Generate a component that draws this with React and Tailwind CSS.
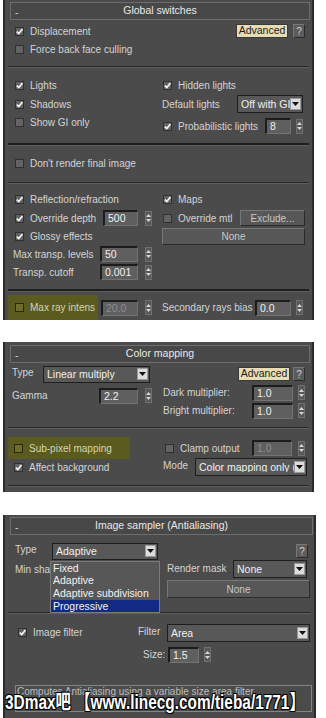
import React from "react";

function Check({ on, olive }) {
  return (
    <span
      className={
        olive
          ? "relative block w-[9px] h-[9px] shrink-0 bg-[#6e6c2a] border border-[#2a290c]"
          : "relative block w-[9px] h-[9px] shrink-0 bg-[#636363] border border-[#303030]"
      }
    >
      {on && (
        <svg className="absolute left-0 top-0" width="7" height="7" viewBox="0 0 7 7">
          <path d="M0.8 3.6 L2.8 5.6 L6.4 1.1" fill="none" stroke="#f4f4f4" strokeWidth="1.7" />
        </svg>
      )}
    </span>
  );
}

function Spin({ cls = "" }) {
  return (
    <span
      className={
        "flex flex-col items-center justify-center gap-[2px] w-[7px] h-[15px] shrink-0 bg-[#585858] border border-[#707070] " +
        cls
      }
    >
      <svg width="5" height="3" viewBox="0 0 5 3">
        <path d="M0 3L2.5 0L5 3Z" fill="#d8d8d8" />
      </svg>
      <svg width="5" height="3" viewBox="0 0 5 3">
        <path d="M0 0L2.5 3L5 0Z" fill="#d8d8d8" />
      </svg>
    </span>
  );
}

function Field({ v, cls = "", dis }) {
  return (
    <span
      className={
        "flex items-center h-[16px] shrink-0 pl-[3px] bg-[#5f5f5f] border-t-2 border-l-2 border-t-[#1c1c1c] border-l-[#1c1c1c] border-r border-b border-r-[#737373] border-b-[#737373] text-[10.5px] leading-none " +
        (dis ? "text-[#8e8e8e] " : "text-[#f0f0f0] ") +
        cls
      }
    >
      {v}
    </span>
  );
}

function Drop({ v, cls = "" }) {
  return (
    <span
      className={
        "flex items-center justify-between shrink-0 bg-[#585858] border border-[#1e1e1e] pl-[3px] pr-[1px] text-[10.5px] text-[#f0f0f0] " +
        cls
      }
    >
      <span className="whitespace-nowrap overflow-hidden leading-none pt-[1px]">{v}</span>
      <span className="w-[11px] h-[12px] bg-[#dcdcdc] border border-[#9a9a9a] flex items-center justify-center shrink-0">
        <svg width="7" height="4" viewBox="0 0 7 4">
          <path d="M0 0H7L3.5 4Z" fill="#111" />
        </svg>
      </span>
    </span>
  );
}

function Btn({ children, cls = "" }) {
  return (
    <span
      className={
        "flex items-center justify-center shrink-0 bg-[#575757] border border-t-[#777777] border-l-[#777777] border-r-[#2a2a2a] border-b-[#2a2a2a] text-[#c8c8c8] text-[10px] " +
        cls
      }
    >
      {children}
    </span>
  );
}

function Adv() {
  return (
    <span className="w-[52px] h-[14px] shrink-0 bg-[#e8dcb4] border border-[#3a3a3a] text-[#1c1c1c] flex items-center justify-center text-[10.5px]">
      Advanced
    </span>
  );
}

function Q({ cls = "" }) {
  return (
    <span
      className={
        "w-[12px] h-[14px] shrink-0 bg-[#5c5c5c] border border-t-[#777777] border-l-[#777777] border-r-[#2c2c2c] border-b-[#2c2c2c] text-[#cfcfcf] flex items-center justify-center text-[10px] " +
        cls
      }
    >
      ?
    </span>
  );
}

function Title({ text, cls = "" }) {
  return (
    <div
      className={
        "relative ml-[5px] h-[18px] border border-[#6d6d6d] bg-[#484848] flex items-center justify-center text-[#e8e8e8] text-[10.5px] " +
        cls
      }
    >
      <span className="absolute left-[4px] top-[2px] text-[#cfcfcf]">-</span>
      {text}
    </div>
  );
}

function Sep({ cls = "" }) {
  return <div className={"mx-[3px] h-[2px] border-t border-t-[#262626] border-b border-b-[#5f5f5f] " + cls} />;
}

function SepThick({ cls = "" }) {
  return <div className={"mx-[3px] h-[3px] border-t-2 border-t-[#1e1e1e] border-b border-b-[#5f5f5f] " + cls} />;
}

function Row({ children, cls = "" }) {
  return <div className={"flex items-center whitespace-nowrap " + cls}>{children}</div>;
}

export default function App() {
  return (
    <div className="relative w-[326px] h-[718px] bg-white overflow-hidden font-['Liberation_Sans','Noto_Sans_CJK_SC',sans-serif] text-[10px] text-[#d4d4d4]">
      {/* Panel 1 */}
      <div className="ml-[3px] w-[311px] h-[320px] bg-[#4b4b4b] border-x-2 border-[#2b2b2b] pt-[2px]">
        <Title text="Global switches" cls="w-[300px]" />
        <div className="pt-[2px] pl-[10px] pr-[7px]">
          <Row cls="h-[18px]">
            <Check on />
            <span className="ml-[6px]">Displacement</span>
            <span className="ml-auto">
              <Adv />
            </span>
            <Q cls="ml-[5px]" />
          </Row>
          <Row cls="h-[18px]">
            <Check />
            <span className="ml-[6px]">Force back face culling</span>
          </Row>
        </div>
        <Sep cls="mt-[8px]" />
        <div className="mt-[8px] flex">
          <div className="w-[157px] pl-[10px]">
            <Row cls="h-[19px]">
              <Check on />
              <span className="ml-[6px]">Lights</span>
            </Row>
            <Row cls="h-[18px]">
              <Check on />
              <span className="ml-[6px]">Shadows</span>
            </Row>
            <Row cls="h-[18px]">
              <Check />
              <span className="ml-[6px]">Show GI only</span>
            </Row>
          </div>
          <div className="w-[141px]">
            <Row cls="h-[19px]">
              <span className="ml-[1px]">
                <Check on />
              </span>
              <span className="ml-[6px]">Hidden lights</span>
            </Row>
            <Row cls="h-[18px]">
              <span>Default lights</span>
              <Drop v="Off with GI" cls="ml-auto w-[66px] h-[18px]" />
            </Row>
            <Row cls="mt-[4px] h-[18px]">
              <span className="ml-[1px]">
                <Check on />
              </span>
              <span className="ml-[6px]">Probabilistic lights</span>
              <Field v="8" cls="ml-auto w-[26px]" />
              <Spin cls="ml-[5px]" />
            </Row>
          </div>
        </div>
        <SepThick cls="mt-[8px]" />
        <div className="mt-[8px] pl-[10px]">
          <Row cls="h-[18px]">
            <Check />
            <span className="ml-[6px]">Don't render final image</span>
          </Row>
        </div>
        <Sep cls="mt-[10px]" />
        <div className="mt-[6px] flex">
          <div className="w-[157px] pl-[10px] pr-[10px]">
            <Row cls="h-[19px]">
              <Check on />
              <span className="ml-[6px]">Reflection/refraction</span>
            </Row>
            <Row cls="h-[18px]">
              <Check on />
              <span className="ml-[6px]">Override depth</span>
              <Field v="500" cls="ml-auto w-[35px]" />
              <Spin cls="ml-[7px]" />
            </Row>
            <Row cls="h-[18px]">
              <Check on />
              <span className="ml-[6px]">Glossy effects</span>
            </Row>
            <Row cls="h-[18px]">
              <span className="-ml-[2px]">Max transp. levels</span>
              <Field v="50" cls="ml-auto w-[38px]" />
              <Spin cls="ml-[7px]" />
            </Row>
            <Row cls="h-[18px]">
              <span className="-ml-[2px]">Transp. cutoff</span>
              <Field v="0.001" cls="ml-auto w-[38px]" />
              <Spin cls="ml-[7px]" />
            </Row>
          </div>
          <div className="w-[143px]">
            <Row cls="h-[19px]">
              <span className="ml-[1px]">
                <Check on />
              </span>
              <span className="ml-[6px]">Maps</span>
            </Row>
            <Row cls="h-[18px]">
              <span className="ml-[1px]">
                <Check />
              </span>
              <span className="ml-[6px]">Override mtl</span>
              <Btn cls="ml-auto w-[65px] h-[16px]">Exclude...</Btn>
            </Row>
            <Row cls="h-[18px]">
              <Btn cls="w-[143px] h-[17px]">None</Btn>
            </Row>
          </div>
        </div>
        <SepThick cls="mt-[8px]" />
        <div className="mt-[3px] h-[25px] flex items-center whitespace-nowrap">
          <div className="ml-[3px] w-[90px] h-[25px] bg-[#5b5a1f] flex items-center pl-[7px]">
            <Check olive />
            <span className="ml-[6px] text-[#d6d6b2]">Max ray intens</span>
          </div>
          <Field v="20.0" dis cls="ml-[3px] w-[37px]" />
          <Spin cls="ml-[7px]" />
          <span className="ml-[10px] w-[93px]">Secondary rays bias</span>
          <Field v="0.0" cls="w-[36px]" />
          <Spin cls="ml-[5px]" />
        </div>
      </div>

      {/* Panel 2 */}
      <div className="mt-[22px] ml-[3px] w-[311px] h-[150px] bg-[#4b4b4b] border-x-2 border-[#2b2b2b] pt-[3px]">
        <Title text="Color mapping" cls="w-[300px]" />
        <div className="mt-[2px] flex">
          <div className="w-[157px] pl-[7px]">
            <Row cls="h-[18px]">
              <span className="w-[31px] -mt-[3px]">Type</span>
              <Drop v="Linear multiply" cls="w-[107px] h-[17px]" />
            </Row>
            <Row cls="mt-[4px] h-[17px]">
              <span className="w-[87px]">Gamma</span>
              <Field v="2.2" cls="w-[39px]" />
              <Spin cls="ml-[7px]" />
            </Row>
          </div>
          <div className="w-[143px]">
            <Row cls="h-[18px]">
              <span className="ml-auto">
                <Adv />
              </span>
              <Q cls="ml-[3px]" />
            </Row>
            <Row cls="mt-[1px] h-[17px]">
              <span className="ml-[1px]">Dark multiplier:</span>
              <Field v="1.0" cls="ml-auto w-[41px]" />
              <Spin cls="ml-[5px]" />
            </Row>
            <Row cls="mt-[1px] h-[17px]">
              <span className="ml-[1px]">Bright multiplier:</span>
              <Field v="1.0" cls="ml-auto w-[41px]" />
              <Spin cls="ml-[5px]" />
            </Row>
          </div>
        </div>
        <Sep cls="mt-[8px]" />
        <div className="flex">
          <div className="w-[157px]">
            <div className="mt-[8px] ml-[3px] w-[122px] h-[22px] bg-[#5b5a1f] flex items-center pl-[6px] whitespace-nowrap">
              <Check olive />
              <span className="ml-[6px] text-[#d6d6b2]">Sub-pixel mapping</span>
            </div>
            <Row cls="h-[16px] pl-[9px]">
              <Check on />
              <span className="ml-[6px]">Affect background</span>
            </Row>
          </div>
          <div className="w-[145px]">
            <Row cls="mt-[10px] h-[18px] pr-[2px]">
              <span className="ml-[3px]">
                <Check />
              </span>
              <span className="ml-[6px]">Clamp output</span>
              <Field v="1.0" dis cls="ml-auto w-[40px]" />
              <Spin cls="ml-[6px]" />
            </Row>
            <Row cls="h-[19px]">
              <span className="ml-[1px] -mt-[3px]">Mode</span>
              <Drop v="Color mapping only (" cls="ml-auto w-[112px] h-[18px]" />
            </Row>
          </div>
        </div>
        <Sep cls="mt-[9px]" />
      </div>

      {/* Panel 3 */}
      <div className="relative mt-[23px] ml-[3px] w-[313px] h-[210px] bg-[#4b4b4b] border-x-2 border-[#2b2b2b] pt-[2px]">
        <Title text="Image sampler (Antialiasing)" cls="w-[303px]" />
        <Row cls="mt-[7px] h-[18px] pl-[10px] pr-[6px]">
          <span className="w-[37px] -mt-[3px]">Type</span>
          <Drop v="Adaptive" cls="w-[106px] h-[17px]" />
          <Q cls="ml-auto w-[10px]" />
        </Row>
        <div className="flex">
          <div className="w-[162px] pl-[10px]">
            <Row cls="h-[18px]">
              <span>Min shading rate</span>
            </Row>
          </div>
          <div className="w-[143px]">
            <Row cls="h-[18px] pr-[3px]">
              <span className="-mt-[2px]">Render mask</span>
              <Drop v="None" cls="ml-auto w-[74px] h-[18px]" />
            </Row>
            <Row cls="mt-[2px] h-[18px]">
              <Btn cls="w-[143px] h-[18px]">None</Btn>
            </Row>
          </div>
        </div>
        <Sep cls="mt-[14px]" />
        <Row cls="mt-[10px] h-[18px]">
          <div className="w-[133px] pl-[13px] flex items-center -mt-[2px]">
            <Check on />
            <span className="ml-[6px]">Image filter</span>
          </div>
          <span className="w-[29px] -mt-[3px]">Filter</span>
          <Drop v="Area" cls="w-[143px] h-[18px]" />
        </Row>
        <Row cls="mt-[4px] h-[17px]">
          <span className="ml-[138px] w-[25px]">Size:</span>
          <Field v="1.5" cls="w-[31px]" />
          <Spin cls="ml-[5px]" />
        </Row>
        <div className="mt-[22px] ml-[10px] w-[297px] h-[27px] border border-[#858585] pl-[1px] text-[#bcbcbc] leading-[12px] whitespace-nowrap overflow-hidden">
          Computes Antialiasing using a variable size area filter.
        </div>

        {/* open dropdown list */}
        <div className="absolute left-[45px] top-[46px] w-[110px] h-[52px] bg-[#575757] border border-[#7a7a7a] text-[#f2f2f2] text-[10.5px] leading-[13px]">
          <div className="h-[12px] pl-[2px]">Fixed</div>
          <div className="h-[13px] pl-[2px]">Adaptive</div>
          <div className="h-[13px] pl-[2px]">Adaptive subdivision</div>
          <div className="h-[12px] pl-[2px] bg-[#132a84]">Progressive</div>
        </div>
      </div>

      {/* watermark */}
      <div className="absolute left-[5px] top-[691px] origin-left scale-x-[0.77] whitespace-nowrap font-bold text-[20px] leading-[22px] text-white [text-shadow:-1px_-1px_0_#000,1px_-1px_0_#000,-1px_1px_0_#000,1px_1px_0_#000,0_0_2px_#000]">
        3Dmax吧 【www.linecg.com/tieba/1771】
      </div>
    </div>
  );
}
